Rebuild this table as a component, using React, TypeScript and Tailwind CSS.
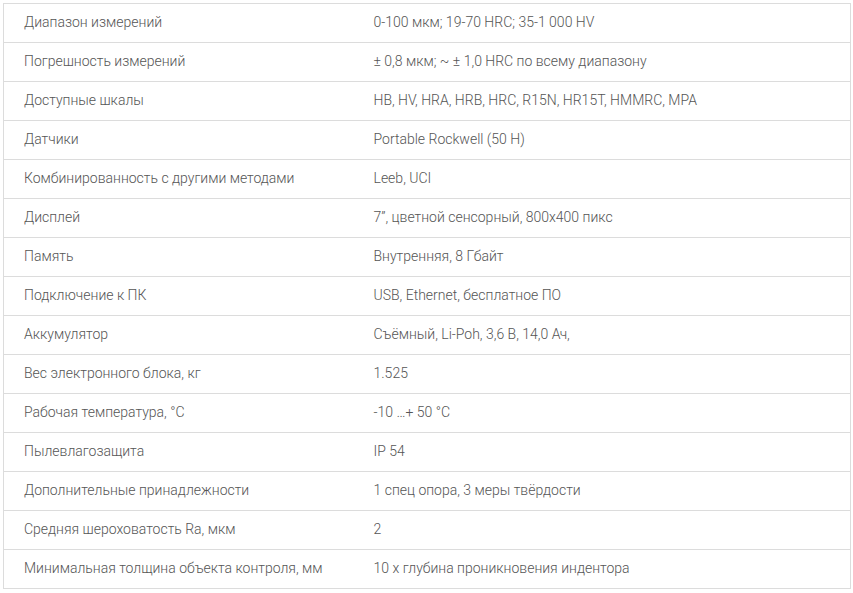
import React from "react";

const rows: [string, string][] = [
  ["Диапазон измерений", "0-100 мкм; 19-70 HRC; 35-1 000 HV"],
  ["Погрешность измерений", "± 0,8 мкм; ~ ± 1,0 HRC по всему диапазону"],
  ["Доступные шкалы", "HB, HV, HRA, HRB, HRC, R15N, HR15T, HMMRC, MPA"],
  ["Датчики", "Portable Rockwell (50 H)"],
  ["Комбинированность с другими методами", "Leeb, UCI"],
  ["Дисплей", "7”, цветной сенсорный, 800x400 пикс"],
  ["Память", "Внутренняя, 8 Гбайт"],
  ["Подключение к ПК", "USB, Ethernet, бесплатное ПО"],
  ["Аккумулятор", "Съёмный, Li-Poh, 3,6 В, 14,0 Ач,"],
  ["Вес электронного блока, кг", "1.525"],
  ["Рабочая температура, °С", "-10 …+ 50 °С"],
  ["Пылевлагозащита", "IP 54"],
  ["Дополнительные принадлежности", "1 спец опора, 3 меры твёрдости"],
  ["Средняя шероховатость Ra, мкм", "2"],
  ["Минимальная толщина объекта контроля, мм", "10 x глубина проникновения индентора"],
];

export default function App() {
  return (
    <div className="bg-white w-[853px] h-[593px] pt-[3px] pl-[3px]" style={{ fontFamily: "Roboto, sans-serif" }}>
      <table className="w-[848px] border-collapse text-[14px] font-light text-[#555]">
        <tbody>
          {rows.map(([a, b], i) => (
            <tr key={i} className="h-[39px]">
              <td className="border-y border-l border-[#dcdcdc] pl-[20px] pb-[2px] w-[350px] align-middle">{a}</td>
              <td className="border-y border-r border-[#dcdcdc] pl-[20px] pb-[2px] align-middle">{b}</td>
            </tr>
          ))}
        </tbody>
      </table>
    </div>
  );
}
